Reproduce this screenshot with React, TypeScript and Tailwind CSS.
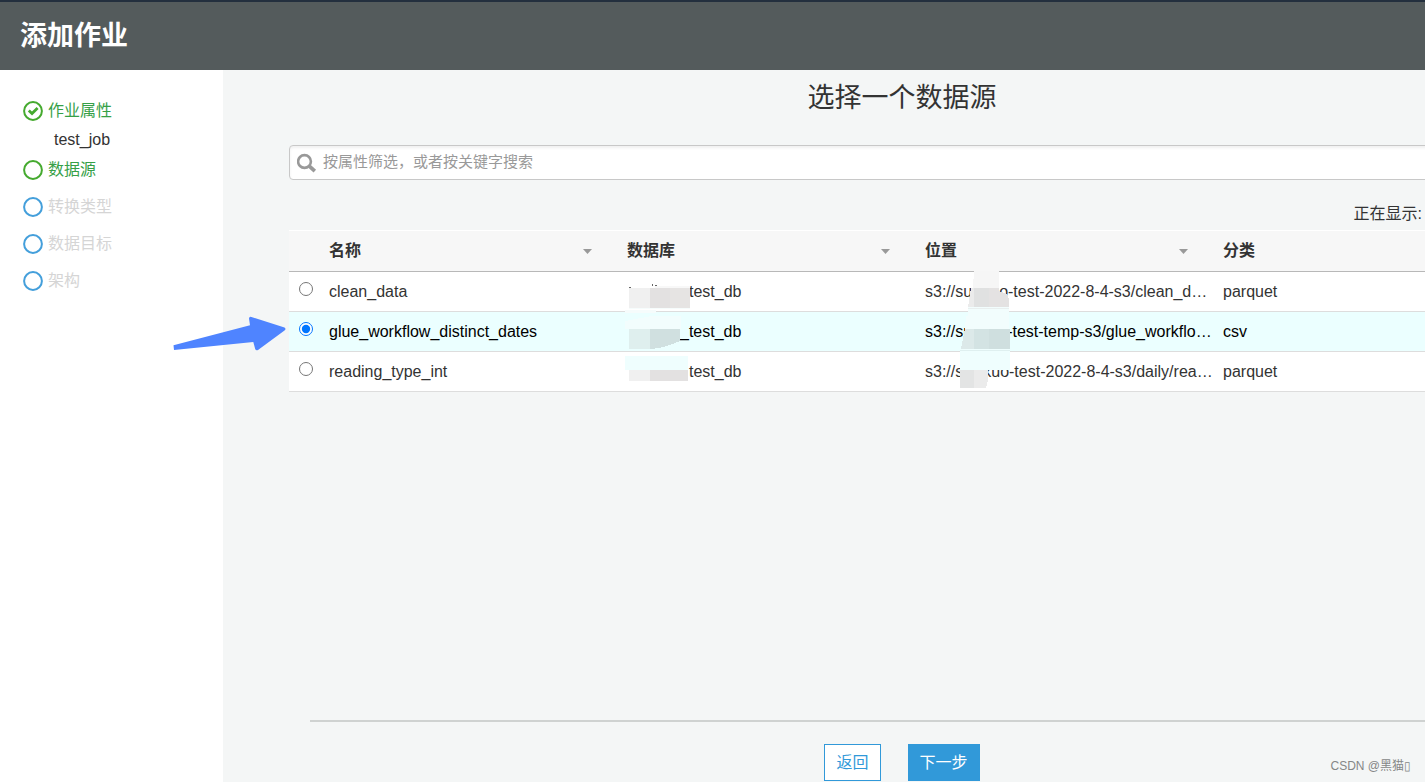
import { useState } from "react";
import type { ReactNode } from "react";

type StepState = "done" | "current" | "pending";

const steps: { label: string; state: StepState; detail?: string }[] = [
  { label: "作业属性", state: "done", detail: "test_job" },
  { label: "数据源", state: "current" },
  { label: "转换类型", state: "pending" },
  { label: "数据目标", state: "pending" },
  { label: "架构", state: "pending" },
];

function StepIcon({ state }: { state: StepState }) {
  const stroke = state === "pending" ? "#449fdb" : "#45aa2f";
  return (
    <svg className="size-5 shrink-0" viewBox="0 0 20 20" fill="none" aria-hidden="true">
      <circle cx="10" cy="10" r="8.9" stroke={stroke} strokeWidth="2" />
      {state === "done" && (
        <path d="M5.8 9.6 9 12.6 14.6 7" stroke="#45aa2f" strokeWidth="2.8" />
      )}
    </svg>
  );
}

function Mask({ children }: { children: ReactNode }) {
  return (
    <svg
      className="pointer-events-none absolute top-0 left-0 z-10 h-10 w-full overflow-visible"
      aria-hidden="true"
      shapeRendering="crispEdges"
    >
      {children}
    </svg>
  );
}

const columns = ["名称", "数据库", "位置", "分类"];

const rows: { name: string; database: ReactNode; location: ReactNode; type: string }[] = [
  {
    name: "clean_data",
    database: (
      <>
        <span className="inline-block w-[62px]" />
        test_db
        <Mask>
          <path d="M10 15h2v1h-2zM33 12h1v2h-1zM36 13h2v1h-2z" fill="#666" />
          <path d="M36 14h35v3h-35z" fill="#f8f8f8" />
          <path d="M10 16h21v20h-21z" fill="#f0f0f0" />
          <path d="M31 16h20v20h-20z" fill="#e3e1e1" />
          <path d="M51 16h20v20h-20z" fill="#e6e4e3" />
          <path d="M6 38h31v3h-31zM10 36h61v1h-61z" fill="#f6fcfc" />
        </Mask>
      </>
    ),
    location: (
      <>
        s3://su
        <span className="inline-block w-[27px]" />
        o-test-2022-8-4-s3/clean_d…
        <Mask>
          <path d="M57-1h25v17h-26z" fill="#f6f6f6" />
          <path d="M54 16h28v3l8 3 2 5v8h-41z" fill="#ebebeb" />
          <path d="M57 16h15v19h-15z" fill="#e0e1e1" />
          <path d="M72 16h10v3l8 3 2 5v8h-20z" fill="#e4e2e2" />
          <path d="M51 35h41v22h-43l2-16z" fill="#f2fdfd" />
          <path d="M51 36h41v1h-41z" fill="#e9efef" />
        </Mask>
      </>
    ),
    type: "parquet",
  },
  {
    name: "glue_workflow_distinct_dates",
    database: (
      <>
        <span className="inline-block w-[53px]" />
        _test_db
        <Mask>
          <path d="M6 9l27-5h29v13h-56z" fill="#f2fdfd" />
          <path d="M10 17h21v20h-21z" fill="#dfefee" />
          <path d="M31 17h30v12l-5 2-8 3-8 2-9 1z" fill="#d0e0e0" />
        </Mask>
      </>
    ),
    location: (
      <>
        s3://su
        <span className="inline-block w-[35px]" />
        -test-temp-s3/glue_workflo…
        <Mask>
          <path d="M49 4h43v13h-44z" fill="#f2fdfd" />
          <path d="M48 17h45v20h-49z" fill="#cfdfdf" />
          <path d="M48 17h9v20h-13z" fill="#dce9e9" />
          <path d="M57 17h15v20h-15z" fill="#d3e3e3" />
          <path d="M43 37h50v21h-50z" fill="#effefe" />
          <path d="M43 38h50v1h-50z" fill="#dff0f0" />
        </Mask>
      </>
    ),
    type: "csv",
  },
  {
    name: "reading_type_int",
    database: (
      <>
        <span className="inline-block w-[62px]" />
        test_db
        <Mask>
          <path d="M6 4h63v14h-63z" fill="#effefe" />
          <path d="M10 18h21v11h-21z" fill="#f0f0f0" />
          <path d="M31 18h38v11h-38z" fill="#e3e1e1" />
        </Mask>
      </>
    ),
    location: (
      <>
        s3://s
        <span className="inline-block w-[20px]" />
        kuo-test-2022-8-4-s3/daily/rea…
        <Mask>
          <path d="M43 4h50v14h-50z" fill="#effefe" />
          <path d="M43 18h28v10l-2 8h-26z" fill="#e3e4e4" />
          <path d="M57 18h14v10l-2 8h-12z" fill="#ebebeb" />
        </Mask>
      </>
    ),
    type: "parquet",
  },
];

export default function App() {
  const [selected, setSelected] = useState(1);

  return (
    <div className="relative flex min-h-screen flex-col overflow-hidden bg-white font-['Liberation_Sans','Noto_Sans_CJK_SC',sans-serif] text-base text-[#333]">
      <header className="flex h-[70px] items-center border-t-2 border-[#232f3e] bg-[#545b5c] px-5">
        <h1 className="text-[27px] font-bold text-white">添加作业</h1>
      </header>

      <div className="flex flex-1">
        <nav className="w-[223px] shrink-0 pt-[22px] pl-[23px]" aria-label="步骤">
          <ol>
            {steps.map((step) => (
              <li key={step.label}>
                <div
                  className={
                    step.state === "pending"
                      ? "flex h-[37px] items-center gap-[5px] text-[#d5d5d5]"
                      : "flex h-[37px] items-center gap-[5px] text-[#36a047]"
                  }
                >
                  <StepIcon state={step.state} />
                  <span>{step.label}</span>
                </div>
                {step.detail && (
                  <div className="h-[22px] pl-[31px] leading-[22px]">{step.detail}</div>
                )}
              </li>
            ))}
          </ol>
        </nav>

        <main className="flex min-w-[1358px] flex-1 flex-col bg-[#f4f6f6] px-[66px]">
          <h2 className="pt-2 text-center text-[27px] leading-10">选择一个数据源</h2>

          <div className="mt-[27px] flex h-[35px] items-center gap-1.5 rounded border border-[#c8c8c8] bg-white px-[7px] shadow-[inset_0_2px_3px_#f0f0f0]">
            <svg className="size-5 shrink-0" viewBox="0 0 20 20" fill="none" aria-hidden="true">
              <circle cx="7.500" cy="8.5" r="6.4" stroke="#999" strokeWidth="2.6" />
              <path d="m12.3 13.2 5.500 5" stroke="#999" strokeWidth="3.8" />
            </svg>
            <input
              type="search"
              aria-label="搜索"
              placeholder="按属性筛选，或者按关键字搜索"
              className="min-w-0 flex-1 bg-transparent text-[15px] outline-none placeholder:text-[#999]"
            />
          </div>

          <p className="mt-[22px] pr-[93px] text-right leading-6">正在显示:</p>

          <table className="mt-1 w-full table-fixed border-separate border-spacing-0 text-left">
            <colgroup>
              <col className="w-8" />
              <col className="w-[298px]" />
              <col className="w-[298px]" />
              <col className="w-[298px]" />
              <col />
            </colgroup>
            <thead>
              <tr className="bg-[#f7f7f7]">
                <th className="h-[42px] border-t border-b border-t-white border-b-[#b8b8b8]" />
                {columns.map((column) => (
                  <th
                    key={column}
                    className="border-t border-b border-t-white border-b-[#b8b8b8] pr-[27px] pl-2 font-bold"
                  >
                    <div className="flex items-center justify-between">
                      {column}
                      <svg width="9" height="5" viewBox="0 0 9 5" aria-hidden="true">
                        <path d="M0 0h9L4.500 5z" fill="#999" />
                      </svg>
                    </div>
                  </th>
                ))}
              </tr>
            </thead>
            <tbody>
              {rows.map((row, index) => (
                <tr
                  key={row.name}
                  className={selected === index ? "bg-[#ebffff] text-black" : "bg-white"}
                >
                  <td className="relative h-10 border-b border-[#ddd] pt-2.5 pl-2.5 align-top">
                    <input
                      type="radio"
                      name="source"
                      id={row.name}
                      aria-label={row.name}
                      checked={selected === index}
                      onChange={() => setSelected(index)}
                      className="m-0 block size-[14px]"
                    />
                    {index === 1 && (
                      <svg
                        className="pointer-events-none absolute top-1 -left-[117px] z-10"
                        width="114"
                        height="36"
                        viewBox="172 316 114 36"
                        aria-hidden="true"
                      >
                        <path
                          d="M173.500 345.200 250 325.300 249 318.500Q249.200 316.200 251.500 317L284.500 327.500Q286.500 329 284.500 330.500L258 350Q256 351 255.200 349L253.300 342 174 350Z"
                          fill="#4f84ff"
                        />
                      </svg>
                    )}
                  </td>
                  <td className="border-b border-[#ddd] pl-2">
                    <label htmlFor={row.name}>{row.name}</label>
                  </td>
                  <td className="relative border-b border-[#ddd] pl-2 whitespace-nowrap">
                    {row.database}
                  </td>
                  <td className="relative border-b border-[#ddd] pl-2 whitespace-nowrap">
                    {row.location}
                  </td>
                  <td className="border-b border-[#ddd] pl-2">{row.type}</td>
                </tr>
              ))}
            </tbody>
          </table>

          <footer className="mt-auto pb-px">
            <hr className="ml-[21px] border-t-2 border-[#cfd2d1]" />
            <div className="flex justify-center gap-[27px] pt-[22px]">
              <button
                type="button"
                className="h-[37px] border border-[#3199d9] bg-white px-[11px] text-[#3199d9]"
              >
                返回
              </button>
              <button type="button" className="h-[37px] bg-[#3199d9] px-3 text-white">
                下一步
              </button>
            </div>
          </footer>
        </main>
      </div>

      <div className="absolute right-[14px] bottom-1.5 text-xs leading-5 text-[#858787]">
        CSDN @黑猫▯
      </div>
    </div>
  );
}
